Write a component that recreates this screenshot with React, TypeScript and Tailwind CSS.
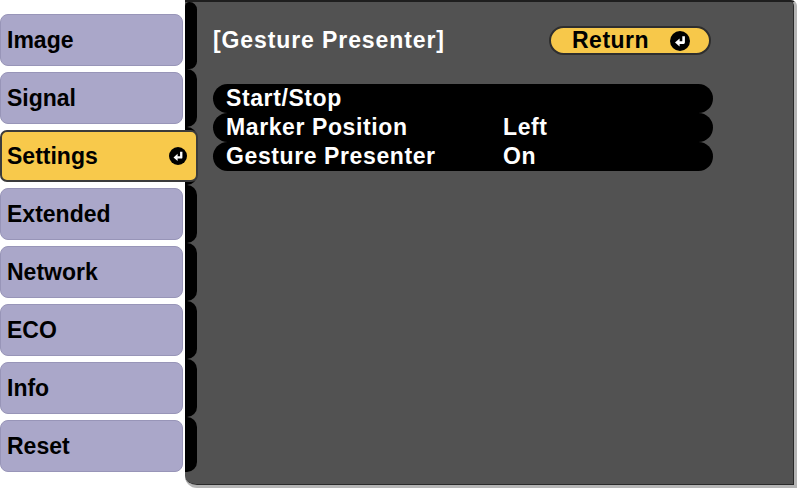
import React from 'react';

const tabs = ['Image', 'Signal', 'Settings', 'Extended', 'Network', 'ECO', 'Info', 'Reset'];

const rows = [
  { label: 'Start/Stop', value: '' },
  { label: 'Marker Position', value: 'Left' },
  { label: 'Gesture Presenter', value: 'On' },
];

// black disc with the white "enter" hook arrow
function EnterIcon({ size }: { size: number }) {
  return (
    <svg width={size} height={size} viewBox="0 0 20 20">
      <circle cx="10" cy="10" r="10" fill="#000" />
      <path d="M13.6 5.2V11.6H9" stroke="#fff" strokeWidth="2.6" fill="none" strokeLinejoin="round" />
      <path d="M5 11.6L9.6 7.6V15.6Z" fill="#fff" />
    </svg>
  );
}

export default function App() {
  return (
    <div
      className="flex h-[489px] w-[800px] overflow-hidden bg-white"
      style={{ fontFamily: '"Liberation Sans", Arial, sans-serif' }}
    >
      {/* Left menu tabs */}
      <div className="flex w-[185px] shrink-0 flex-col gap-[6px] pt-[14px]">
        {tabs.map((t) =>
          t === 'Settings' ? (
            <div
              key={t}
              className="relative z-10 flex h-[52px] w-[198px] items-center justify-between rounded-[7px] border-2 border-[#3b3b3b] bg-[#f8c94b] pl-[5px] pr-[9px] text-[23px] font-bold text-black"
            >
              <span>{t}</span>
              <EnterIcon size={18} />
            </div>
          ) : (
            <div
              key={t}
              className="flex h-[52px] w-[183px] items-center rounded-[8px] border border-[#9895b8] bg-[#aaa7c9] pl-[6px] text-[23px] font-bold text-black"
            >
              {t}
            </div>
          )
        )}
      </div>

      {/* Main panel */}
      <div className="flex h-[488px] w-[612px] shrink-0 overflow-hidden rounded-tr-[6px] rounded-bl-[12px] border-t-2 border-r-[3px] border-b-[3px] border-t-[#1e1e1e] border-r-[#b5b5b5] border-b-[#b5b5b5] bg-[#525252] shadow-[inset_-1px_-1px_0_#2a2a2a]">
        {/* scalloped black strip along the tabs */}
        <div className="flex w-[12px] shrink-0 flex-col">
          {tabs.map((t, i) => (
            <div
              key={t}
              className={
                i === 0
                  ? 'h-[67px] rounded-r-[10px] rounded-tl-[6px] bg-black'
                  : i === tabs.length - 1
                  ? 'h-[55px] rounded-r-[10px] bg-black'
                  : 'h-[58px] rounded-r-[10px] bg-black'
              }
            />
          ))}
        </div>

        {/* Content */}
        <div className="flex flex-1 flex-col pl-[16px] pr-[81px]">
          <div className="mt-[24px] flex h-[29px] items-center justify-between">
            <span className="text-[23px] font-bold tracking-[0.9px] text-white">[Gesture Presenter]</span>
            <div className="mr-[2px] flex h-[29px] w-[162px] items-center rounded-full border-2 border-[#2e2e2e] bg-[#f7c84a] pl-[21px] text-[23px] font-bold tracking-[0.5px] text-black">
              <span className="w-[98px]">Return</span>
              <EnterIcon size={20} />
            </div>
          </div>

          <div className="mt-[29px] flex flex-col">
            {rows.map((r) => (
              <div
                key={r.label}
                className="flex h-[29px] items-center rounded-full bg-black pl-[13px] text-[23px] font-bold tracking-[0.6px] text-white"
              >
                <span className="w-[277px]">{r.label}</span>
                <span>{r.value}</span>
              </div>
            ))}
          </div>
        </div>
      </div>
    </div>
  );
}
